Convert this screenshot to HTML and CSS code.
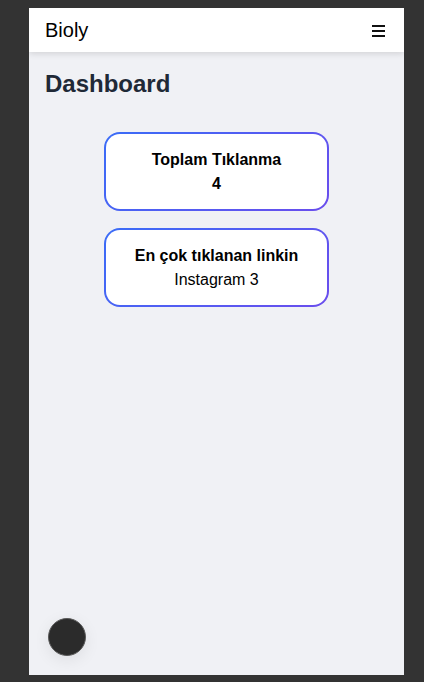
FILE: index.html
```html
<!DOCTYPE html>
<html lang="tr">
<head>
<meta charset="utf-8">
<meta name="viewport" content="width=device-width, initial-scale=1">
<title>Bioly - Dashboard</title>
<link rel="stylesheet" href="styles.css">
</head>
<body>

<div class="phone">
  <nav class="navbar">
    <div class="brand">Bioly</div>
    <button class="menubutton" type="button" aria-label="Menu">
      <svg width="13" height="12" viewBox="0 0 13 12"><rect x="0" y="0" width="13" height="2"/><rect x="0" y="5" width="13" height="2"/><rect x="0" y="10" width="13" height="2"/></svg>
    </button>
  </nav>

  <main class="content">
    <h1 class="title">Dashboard</h1>

    <div class="stats">
      <div class="statcard">
        <div class="statlabel">Toplam Tıklanma</div>
        <div class="statvalue bold">4</div>
      </div>
      <div class="statcard">
        <div class="statlabel">En çok tıklanan linkin</div>
        <div class="statvalue">Instagram 3</div>
      </div>
    </div>
  </main>

  <button class="fab" type="button" aria-label="Action"></button>
</div>

</body>
</html>
```

FILE: styles.css
```css
html, body {
  margin: 0;
  background-color: #333333;
}

body {
  padding: 8px 20px 7px 29px;
  font-family: "Liberation Sans", Arial, Helvetica, sans-serif;
}

/* Phone frame */
.phone {
  position: relative;
  width: 375px;
  height: 667px;
  background-color: #f0f1f5;
  overflow: hidden;
}

/* Navbar */
.navbar {
  height: 44px;
  padding: 0 19px 0 16px;
  display: flex;
  align-items: center;
  justify-content: space-between;
  background-color: #ffffff;
  box-shadow: 0 2px 6px rgba(0, 0, 0, 0.12);
}

.brand {
  font-size: 20px;
  color: #000000;
}

.menubutton {
  display: flex;
  padding: 0;
  margin-top: 1px;
  border: none;
  background: none;
  cursor: pointer;
}

.menubutton svg {
  fill: #111111;
}

/* Content */
.content {
  padding: 18px 16px 16px 16px;
}

.title {
  margin: 0 0 34px 0;
  font-size: 24px;
  line-height: 28px;
  font-weight: bold;
  color: #1f2937;
}

/* Stat cards */
.stats {
  display: flex;
  flex-direction: column;
  align-items: center;
  gap: 17px;
}

.statcard {
  box-sizing: border-box;
  width: 225px;
  height: 79px;
  padding-top: 14px;
  text-align: center;
  border: 2px solid transparent;
  border-radius: 16px;
  background:
    linear-gradient(#ffffff, #ffffff) padding-box,
    linear-gradient(135deg, #3a6cf7, #6a4ded) border-box;
  font-size: 16px;
  line-height: 24px;
  color: #000000;
}

.statlabel {
  font-weight: bold;
}

.statvalue.bold {
  font-weight: bold;
}

/* Floating button */
.fab {
  position: absolute;
  left: 19px;
  bottom: 19px;
  width: 38px;
  height: 38px;
  padding: 0;
  border-radius: 50%;
  border: 1px solid #5a5a5a;
  background-color: #2b2b2b;
  box-shadow: 0 4px 16px rgba(0, 0, 0, 0.08);
  cursor: pointer;
}
```
